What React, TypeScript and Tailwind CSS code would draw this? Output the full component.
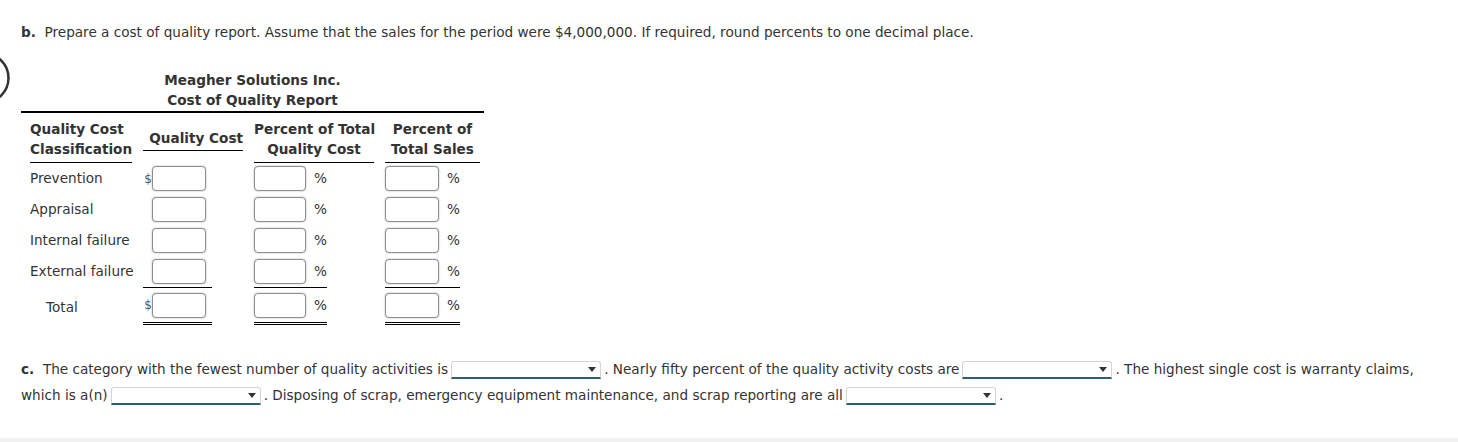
import { Fragment } from "react";

const rows = ["Prevention", "Appraisal", "Internal failure", "External failure"];

const Box = () => (
  <span className="inline-block h-[25px] w-[54px] rounded-[4px] border border-[#8e8e8e] bg-white shadow-[0_0_2px_rgba(0,0,0,0.3)]" />
);

const Dropdown = () => (
  <span className="mx-[3px] inline-flex h-[18px] w-[150px] items-center justify-end rounded-t-[3px] border border-b-2 border-[#d4d4d4] border-b-[#2f5d6c] bg-white pr-[4px] align-middle">
    <svg width="8" height="5" viewBox="0 0 8 5">
      <path d="M0 0 L8 0 L4 5 Z" fill="#333" />
    </svg>
  </span>
);

const DataRow = ({ label, dollar, total }: { label: string; dollar?: boolean; total?: boolean }) => {
  const line = total ? "border-t border-b-[3px] border-b-black border-double border-t-black" : "";
  return (
    <div className={`flex items-center ${total ? "h-[38px]" : "h-[31px]"}`}>
      <div className={`w-[122px] whitespace-nowrap ${total ? "pl-[25px] pt-[3px]" : "pl-[9px]"}`}>{label}</div>
      <div className={`flex h-full w-[69px] items-center ${line}`}>
        <span className="w-[9px] text-right text-[12px] text-[#555]">{dollar ? "$" : ""}</span>
        <Box />
      </div>
      <div className={`ml-[42px] flex h-full w-[73px] items-center gap-[8px] ${line}`}>
        <Box />
        <span>%</span>
      </div>
      <div className={`ml-[58px] flex h-full w-[75px] items-center gap-[8px] ${line}`}>
        <Box />
        <span>%</span>
      </div>
    </div>
  );
};

export default function App() {
  return (
    <div className="relative flex h-[442px] flex-col bg-white font-['DejaVu_Sans',Verdana,sans-serif] text-[13.6px] text-[#333]">
      <svg className="absolute left-0 top-[52px]" width="12" height="52" viewBox="0 0 12 52">
        <circle cx="-16" cy="26" r="24.5" fill="none" stroke="#333" strokeWidth="2.5" />
      </svg>

      <div className="pl-[21px] pt-[24px]">
        <p className="leading-[16px]">
          <b>b.</b>&nbsp; Prepare a cost of quality report. Assume that the sales for the period were $4,000,000. If required, round percents to one decimal place.
        </p>

        <div className="mt-[30px] w-[463px]">
          <div className="border-b-2 border-black pb-[1px] text-center font-bold leading-[20px]">
            <div>Meagher Solutions Inc.</div>
            <div>Cost of Quality Report</div>
          </div>

          <div className="flex h-[50px] items-center font-bold leading-[20px]">
            <div className="w-[122px] self-end pl-[9px]">
              <div className="inline-block border-b border-black pb-[3px]">
                Quality Cost
                <br />
                Classification
              </div>
            </div>
            <div className="w-[111px] pt-[2px]">
              <div className="w-[100px] whitespace-nowrap border-b border-black pb-[2px] text-right">Quality Cost</div>
            </div>
            <div className="w-[120px] self-end whitespace-nowrap border-b border-black pb-[3px] text-center">
              Percent of Total
              <br />
              Quality Cost
            </div>
            <div className="ml-[11px] w-[95px] self-end whitespace-nowrap border-b border-black pb-[3px] text-center">
              Percent of
              <br />
              Total Sales
            </div>
          </div>

          {rows.map((r, i) => (
            <Fragment key={r}>
              <DataRow label={r} dollar={i === 0} />
            </Fragment>
          ))}
          <DataRow label="Total" dollar total />
        </div>

        <p className="mt-[31px] whitespace-nowrap leading-[26px]">
          <b>c.</b>&nbsp; The category with the fewest number of quality activities is
          <Dropdown />. Nearly fifty percent of the quality activity costs are
          <Dropdown />. The highest single cost is warranty claims,
          <br />
          which is a(n)
          <Dropdown />. Disposing of scrap, emergency equipment maintenance, and scrap reporting are all
          <Dropdown />.
        </p>
      </div>

      <div className="mt-auto h-[4px] bg-[#f1f1f1]" />
    </div>
  );
}
